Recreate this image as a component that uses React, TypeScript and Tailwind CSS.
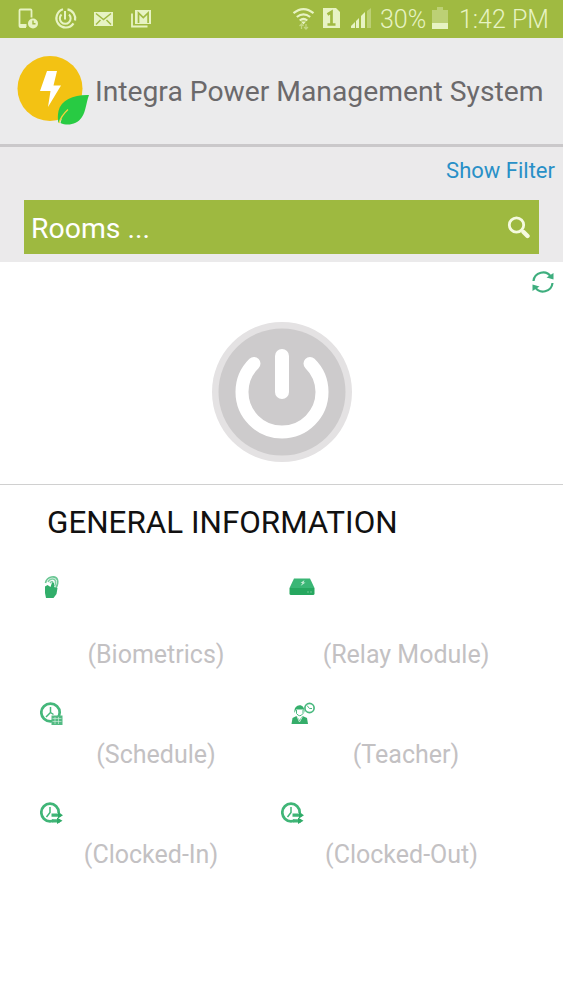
import type { ReactNode } from 'react';

type InfoItem = {
    label: string;
    icon: ReactNode;
    iconClass: string;
    labelClass: string;
};

function StatusBar() {
    return (
        <div className="flex h-[38px] items-start justify-between bg-[#a0ba41] pl-[17px] pr-[13px] text-[#e7f3c3]">
            <svg width="136" height="38" viewBox="17 0 136 38" fill="none" stroke="currentColor">
                <path d="M26 27h-5.5q-1 0-1-1V10.500q0-1 1-1h10q1 0 1 1v7" strokeWidth="1.800" />
                <path d="M19.500 25.500h7" strokeWidth="3" />
                <circle cx="33" cy="23.500" r="5" fill="currentColor" stroke="none" />
                <path d="M33 20.500v3.300h2.500" stroke="#a0ba41" strokeWidth="1.400" />

                <path d="M63 9.300a9.300 9.300 0 1 0 10.500 14M75 20.500A9.400 9.400 0 0 0 67.500 9.300" strokeWidth="2.200" />
                <path d="M61.500 14.500a5.400 5.400 0 1 0 7.500 0M65 11v8.500" strokeWidth="2" />

                <path d="M94 12h19v14H94z" fill="currentColor" stroke="none" />
                <path d="m96 13.500 7.500 6 7.500-6M96 24.500l4.500-4.500M111 24.500l-4.500-4.500" stroke="#a0ba41" strokeWidth="1.500" />

                <path d="M132 13.500V26.500h15.500" strokeWidth="1.800" />
                <path d="M135 10h16v14h-16z" fill="currentColor" stroke="none" />
                <path d="M138.500 23V13l4.800 4.500 4.800-4.500v10" stroke="#a0ba41" strokeWidth="1.700" />
            </svg>
            <div className="flex h-[38px] items-center font-light">
                <svg width="88" height="38" viewBox="292 0 88 38" fill="none" stroke="currentColor">
                    <path d="M293.500 13.200q10-8.200 20 0M296.800 17q6.700-5.300 13.400 0M299.700 20.500q3.800-3 7.600 0" strokeWidth="2.200" />
                    <path d="m301 21.500 2.500 3 2.500-3z" fill="currentColor" stroke="none" />
                    <path d="M301.500 29v-5m-2 2 2-2 2 2M306 24v5m-2-2 2 2 2-2" strokeWidth="1.300" opacity=".5" />
                    <path d="M323 8h13l4 4v16h-17z" fill="currentColor" stroke="none" />
                    <path d="M327.500 14.500 331.500 12v12M327.500 24.500h8" stroke="#a0ba41" strokeWidth="2.700" />
                    <path d="M351 28v-2l4-4v6zM356 28v-7l3-3v10zM361 28V16l4-4v16z" fill="currentColor" stroke="none" />
                    <path d="M367 28V11l4-3v20z" fill="currentColor" stroke="none" opacity=".4" />
                </svg>
                <span className="w-[52px] whitespace-nowrap pt-px text-[25px] leading-[38px]">30%</span>
                <svg width="16" height="38" viewBox="432 0 16 38" fill="currentColor">
                    <path d="M432 10h5V7h6v3h5v13h-16z" opacity=".4" />
                    <path d="M432 23h16v6h-16z" />
                </svg>
                <span className="ml-[11px] w-[91px] whitespace-nowrap pt-px text-[25px] leading-[38px]">1:42 PM</span>
            </div>
        </div>
    );
}

function Logo() {
    return (
        <svg width="73" height="72" viewBox="17 55 73 72">
            <circle cx="50" cy="88.500" r="32.500" fill="#f3c213" />
            <path d="M47 71h10l-3.500 14.500H61L48 107l2.500-16H40z" fill="#fff" />
            <path d="M89 95c-15-.5-28 5-30.500 16-.8 4-.8 8-.2 12L62 117.500l-1.500 5.500C67 126 77 125 82 117c4-6 4-14 7-22z" fill="#28cb43" />
            <path d="M59 123q2-7 9-13.500" stroke="#f3d33c" strokeWidth="1.300" fill="none" />
        </svg>
    );
}

function PowerButton() {
    return (
        <button type="button" aria-label="Power">
            <svg width="142" height="142" viewBox="0 0 142 142" fill="none">
                <circle cx="71" cy="71" r="70" fill="#e4e2e3" />
                <circle cx="71" cy="71" r="63.500" fill="#cdcbcc" />
                <path d="M43 42.500a40 40 0 1 0 56 0" stroke="#fff" strokeWidth="13" strokeLinecap="round" />
                <path d="M71 35v36" stroke="#fff" strokeWidth="14" strokeLinecap="round" />
            </svg>
        </button>
    );
}

function FingerprintIcon() {
    return (
        <svg width="16" height="24" viewBox="0 0 16 24" fill="none" stroke="#37b36f">
            <path d="M1.500 8C3 1 12 0 13.500 5c1 3.500-.5 6-1.500 8" strokeWidth="1.600" opacity=".75" />
            <path d="M4 7c2-4 7-4 7.500-.5.3 2.500-.5 4-1 5M6 8q2.500-3 3 0" strokeWidth="1.500" opacity=".65" />
            <path d="M1 11.500 3.500 10l3 2L8 7.500l2 .5v4l3.500 1-1 6-3 4H2l-1-5z" fill="#31ae6a" stroke="none" />
        </svg>
    );
}

function RelayIcon() {
    return (
        <svg width="26" height="18" viewBox="0 0 26 18">
            <path d="M5 .5h16l4.500 9.500H.5z" fill="#3ab675" />
            <path d="M.5 10h25v5.500q0 1.500-1.500 1.500H2Q.5 17 .5 15.500z" fill="#26a75f" />
            <path d="m15.500 2-4 3h2l-2 3 5-3.500h-2z" fill="#c8edd8" />
            <path d="M18 14h2m1 0h2" stroke="#6cc794" />
        </svg>
    );
}

function ScheduleIcon() {
    return (
        <svg width="24" height="24" viewBox="0 0 24 24" fill="none" stroke="#45b77b">
            <ellipse cx="10.500" cy="10.500" rx="9.200" ry="8.800" strokeWidth="2.700" />
            <path d="M10.500 5v5.500L6 15M10.500 10.500l3 2" strokeWidth="1.500" />
            <path d="M11.500 13.500h11V23h-11z" fill="#53bb83" stroke="none" />
            <path d="M12.500 16.500h9M12.500 19.500h9M15 15v7M18.500 15v7" stroke="#d9f2e3" strokeWidth=".6" />
        </svg>
    );
}

function TeacherIcon() {
    return (
        <svg width="24" height="24" viewBox="0 0 24 24" fill="none" stroke="#48b97e">
            <path d="M3.500 11C2 1.500 14.500 0 13.500 11l-1-3.500-7.500 0z" fill="#35af6c" stroke="none" />
            <path d="M5.500 8v3.500q3.300 4.500 6.500 0V8" strokeWidth="1" />
            <path d="m.5 22 1-6 4-2 3 4 3-4 4.500 2 1 6z" fill="#35ad6a" stroke="none" />
            <path d="M6 14.500 8.500 20l3-5.500" stroke="#c8ecd7" />
            <circle cx="18.500" cy="6" r="4.600" strokeWidth="1.700" />
            <path d="m16 3.500 2.500 3h2.500" />
        </svg>
    );
}

function ClockIcon() {
    return (
        <svg width="24" height="24" viewBox="0 0 24 24" fill="none" stroke="#40b577">
            <ellipse cx="10" cy="10.500" rx="8.700" ry="8.800" strokeWidth="2.700" />
            <path d="M10 5v5.500L6.500 15" strokeWidth="1.500" />
            <path d="M12 11h11v10H14z" fill="#fff" stroke="none" />
            <path d="M11.500 13.200h9M12 18.800h8" strokeWidth="3.200" />
            <path d="m18 10 5 3.300-5 3.300zM17 15.500l5.500 3.300-5.500 3.300z" fill="#2fab68" stroke="none" />
        </svg>
    );
}

const items: InfoItem[] = [
    { label: '(Biometrics)', icon: <FingerprintIcon />, iconClass: 'ml-[13px] h-[73px] pt-[12px]', labelClass: '' },
    { label: '(Relay Module)', icon: <RelayIcon />, iconClass: 'ml-[8px] h-[73px] pt-[15px]', labelClass: '' },
    { label: '(Schedule)', icon: <ScheduleIcon />, iconClass: 'ml-[9px] h-[62px] pt-[28px]', labelClass: '' },
    { label: '(Teacher)', icon: <TeacherIcon />, iconClass: 'ml-[10px] h-[62px] pt-[28px]', labelClass: '' },
    { label: '(Clocked-In)', icon: <ClockIcon />, iconClass: 'ml-[9px] h-[62px] pt-[28px]', labelClass: 'pr-[10px]' },
    { label: '(Clocked-Out)', icon: <ClockIcon />, iconClass: 'h-[62px] pt-[28px]', labelClass: 'pr-[9px]' },
];

export default function App() {
    return (
        <div className="flex h-[1000px] w-[563px] flex-col overflow-hidden bg-white font-['Roboto',sans-serif]">
            <StatusBar />

            <header className="flex h-[109px] items-center border-b-3 border-[#cac8ca] bg-[#ebebec] pl-[17px]">
                <Logo />
                <h1 className="ml-[5px] whitespace-nowrap pt-[3px] text-[28.250px] text-[#6b696b]">
                    Integra Power Management System
                </h1>
            </header>

            <section className="flex h-[115px] flex-col bg-[#ebeaeb]">
                <a href="#" className="mt-[5px] self-end pr-[8px] text-[22px] leading-[37px] text-[#2990c7]">
                    Show Filter
                </a>
                <div className="mx-[24px] mt-[11px] flex h-[54px] items-center justify-between bg-[#9eb940] pl-[7px] pr-[9px] text-white">
                    <span className="pt-[3px] text-[28.400px] leading-[36px]">Rooms ...</span>
                    <svg width="23" height="23" viewBox="0 0 23 23" fill="none" stroke="#f5fadf" strokeLinecap="round">
                        <circle cx="9.500" cy="9" r="7.200" strokeWidth="2.800" />
                        <path d="m16.500 16 4 4" strokeWidth="4.400" />
                    </svg>
                </div>
            </section>

            <section className="flex h-[223px] flex-col border-b border-[#d0d0d0]">
                <button type="button" aria-label="Refresh" className="mr-[9px] mt-[9px] self-end">
                    <svg width="22" height="22" viewBox="0 0 22 22" fill="none" stroke="#3eae7e" strokeWidth="2.200">
                        <path d="M1.500 10A9.500 9.500 0 0 1 19 6M20.500 12A9.500 9.500 0 0 1 3 16" />
                        <path d="M21.500 2v6.500l-7-2zM.5 20v-6.500l7 2z" fill="#3eae7e" stroke="none" />
                    </svg>
                </button>
                <div className="mt-[28px] flex justify-center">
                    <PowerButton />
                </div>
            </section>

            <main>
                <h2 className="h-[78px] whitespace-nowrap pl-[47px] pt-[18px] text-[31.400px] leading-[40px] text-[#111]">
                    GENERAL INFORMATION
                </h2>
                <div className="ml-[31px] grid w-[500px] grid-cols-2">
                    {items.map((item) => (
                        <div key={item.label}>
                            <div className={item.iconClass}>{item.icon}</div>
                            <p className={`text-center text-[25px] leading-[38px] text-[#c3c1c3] ${item.labelClass}`}>
                                {item.label}
                            </p>
                        </div>
                    ))}
                </div>
            </main>
        </div>
    );
}
